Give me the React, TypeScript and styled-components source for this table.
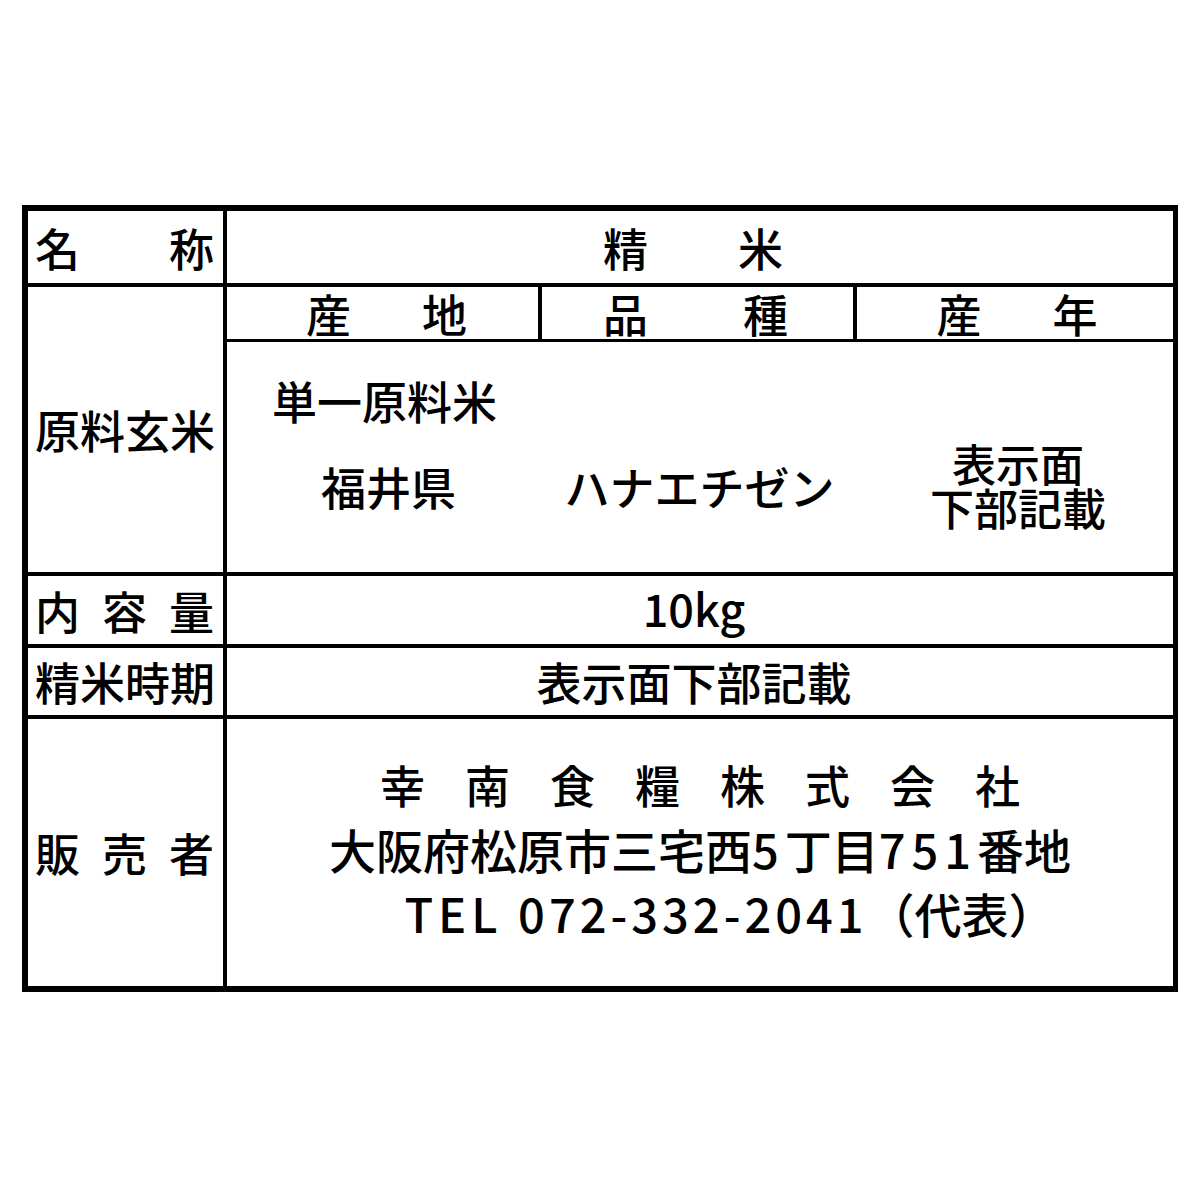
import React from "react";
import styled, { createGlobalStyle } from "styled-components";

const GlobalStyle = createGlobalStyle`
  html, body {
    margin: 0;
    padding: 0;
    background: #ffffff;
  }
  body {
    font-family: "Noto Sans CJK JP", "Noto Sans", sans-serif;
    color: #000000;
    font-weight: 500;
  }
`;

const Page = styled.div`
  padding: 205px 0 0 22px;
  width: 1200px;
  height: 1200px;
  box-sizing: border-box;
`;

const Table = styled.div`
  box-sizing: border-box;
  width: 1156px;
  border: 6px solid #000;
  background: #000;
  display: grid;
  grid-template-columns: 195px 946px;
  grid-template-rows: 72px 285px 68px 67px 267px;
  column-gap: 4px;
  row-gap: 4px;
`;

const LabelCell = styled.div`
  background: #fff;
  display: flex;
  align-items: center;
  justify-content: space-between;
  padding: 0 9px 0 7px;
  font-size: 45px;
  line-height: 1;
  white-space: nowrap;
`;

const ValueCell = styled.div<{ $padRight?: number; $padBottom?: number }>`
  background: #fff;
  display: flex;
  align-items: center;
  justify-content: center;
  font-size: 45px;
  line-height: 1;
  padding-right: ${(p) => p.$padRight ?? 0}px;
  padding-bottom: ${(p) => p.$padBottom ?? 0}px;
  white-space: nowrap;
`;

const Spread = styled.div<{ $gap: number }>`
  display: flex;
  gap: ${(p) => p.$gap}px;
`;

const RawBlock = styled.div`
  display: grid;
  grid-template-rows: 52px 1fr;
  row-gap: 3px;
  background: #000;
`;

const ThreeCols = styled.div<{ $lined?: boolean }>`
  display: grid;
  grid-template-columns: 311px 311px 1fr;
  column-gap: 4px;
  background: ${(p) => (p.$lined ? "#000" : "#fff")};
`;

const SubHead = styled.div<{ $shift?: number }>`
  background: #fff;
  display: flex;
  align-items: center;
  justify-content: center;
  font-size: 45px;
  line-height: 1;
  padding-left: ${(p) => Math.max(p.$shift ?? 0, 0)}px;
  padding-right: ${(p) => Math.max(-(p.$shift ?? 0), 0)}px;
`;

const RawContent = styled.div`
  background: #fff;
  display: flex;
  flex-direction: column;
  padding-top: 32px;
`;

const BlendNote = styled.div`
  font-size: 45px;
  line-height: 54px;
  padding-left: 45px;
`;

const RawValue = styled.div<{ $shift?: number }>`
  display: flex;
  flex-direction: column;
  align-items: center;
  justify-content: center;
  font-size: 45px;
  line-height: 44px;
  height: 90px;
  margin-top: 14px;
  padding-left: ${(p) => p.$shift ?? 0}px;
  white-space: nowrap;
`;

const StackedValue = styled(RawValue)`
  font-size: 44px;
  margin-top: 12px;
`;

const SellerBlock = styled.div`
  display: flex;
  flex-direction: column;
  align-items: center;
  font-size: 47px;
  line-height: 64px;
  padding-bottom: 8px;
`;

const SellerLine = styled.div<{ $shift?: number }>`
  display: block;
  white-space: pre;
  padding-left: ${(p) => p.$shift ?? 0}px;
`;

const CompanyName = styled.div`
  display: flex;
  gap: 40px;
  font-size: 45px;
`;

const Spaced = styled.span<{ $spacing: number }>`
  letter-spacing: ${(p) => p.$spacing}px;
`;

const chars = (s: string) => Array.from(s).map((c, i) => <span key={i}>{c}</span>);

export default function App() {
  return (
    <>
      <GlobalStyle />
      <Page>
        <Table>
          <LabelCell>{chars("名称")}</LabelCell>
          <ValueCell $padRight={14}>
            <Spread $gap={90}>{chars("精米")}</Spread>
          </ValueCell>

          <LabelCell>{chars("原料玄米")}</LabelCell>
          <RawBlock>
            <ThreeCols $lined>
              <SubHead $shift={8}>
                <Spread $gap={71}>{chars("産地")}</Spread>
              </SubHead>
              <SubHead $shift={-4}>
                <Spread $gap={95}>{chars("品種")}</Spread>
              </SubHead>
              <SubHead $shift={4}>
                <Spread $gap={71}>{chars("産年")}</Spread>
              </SubHead>
            </ThreeCols>
            <RawContent>
              <BlendNote>単一原料米</BlendNote>
              <ThreeCols>
                <RawValue $shift={12}>福井県</RawValue>
                <RawValue $shift={4}>ハナエチゼン</RawValue>
                <StackedValue $shift={6}>
                  <div>表示面</div>
                  <div>下部記載</div>
                </StackedValue>
              </ThreeCols>
            </RawContent>
          </RawBlock>

          <LabelCell>{chars("内容量")}</LabelCell>
          <ValueCell $padRight={12} $padBottom={6}>10kg</ValueCell>

          <LabelCell>{chars("精米時期")}</LabelCell>
          <ValueCell $padRight={12}>表示面下部記載</ValueCell>

          <LabelCell>{chars("販売者")}</LabelCell>
          <ValueCell>
            <SellerBlock>
              <CompanyName>{chars("幸南食糧株式会社")}</CompanyName>
              <SellerLine>
                {"大阪府松原市三宅西"}
                <Spaced $spacing={6}>5</Spaced>
                {"丁目"}
                <Spaced $spacing={6}>751</Spaced>
                {"番地"}
              </SellerLine>
              <SellerLine $shift={60}>
                <Spaced $spacing={5}>{"TEL "}</Spaced>
                <Spaced $spacing={4}>072-332-2041</Spaced>
                {"（代表）"}
              </SellerLine>
            </SellerBlock>
          </ValueCell>
        </Table>
      </Page>
    </>
  );
}
